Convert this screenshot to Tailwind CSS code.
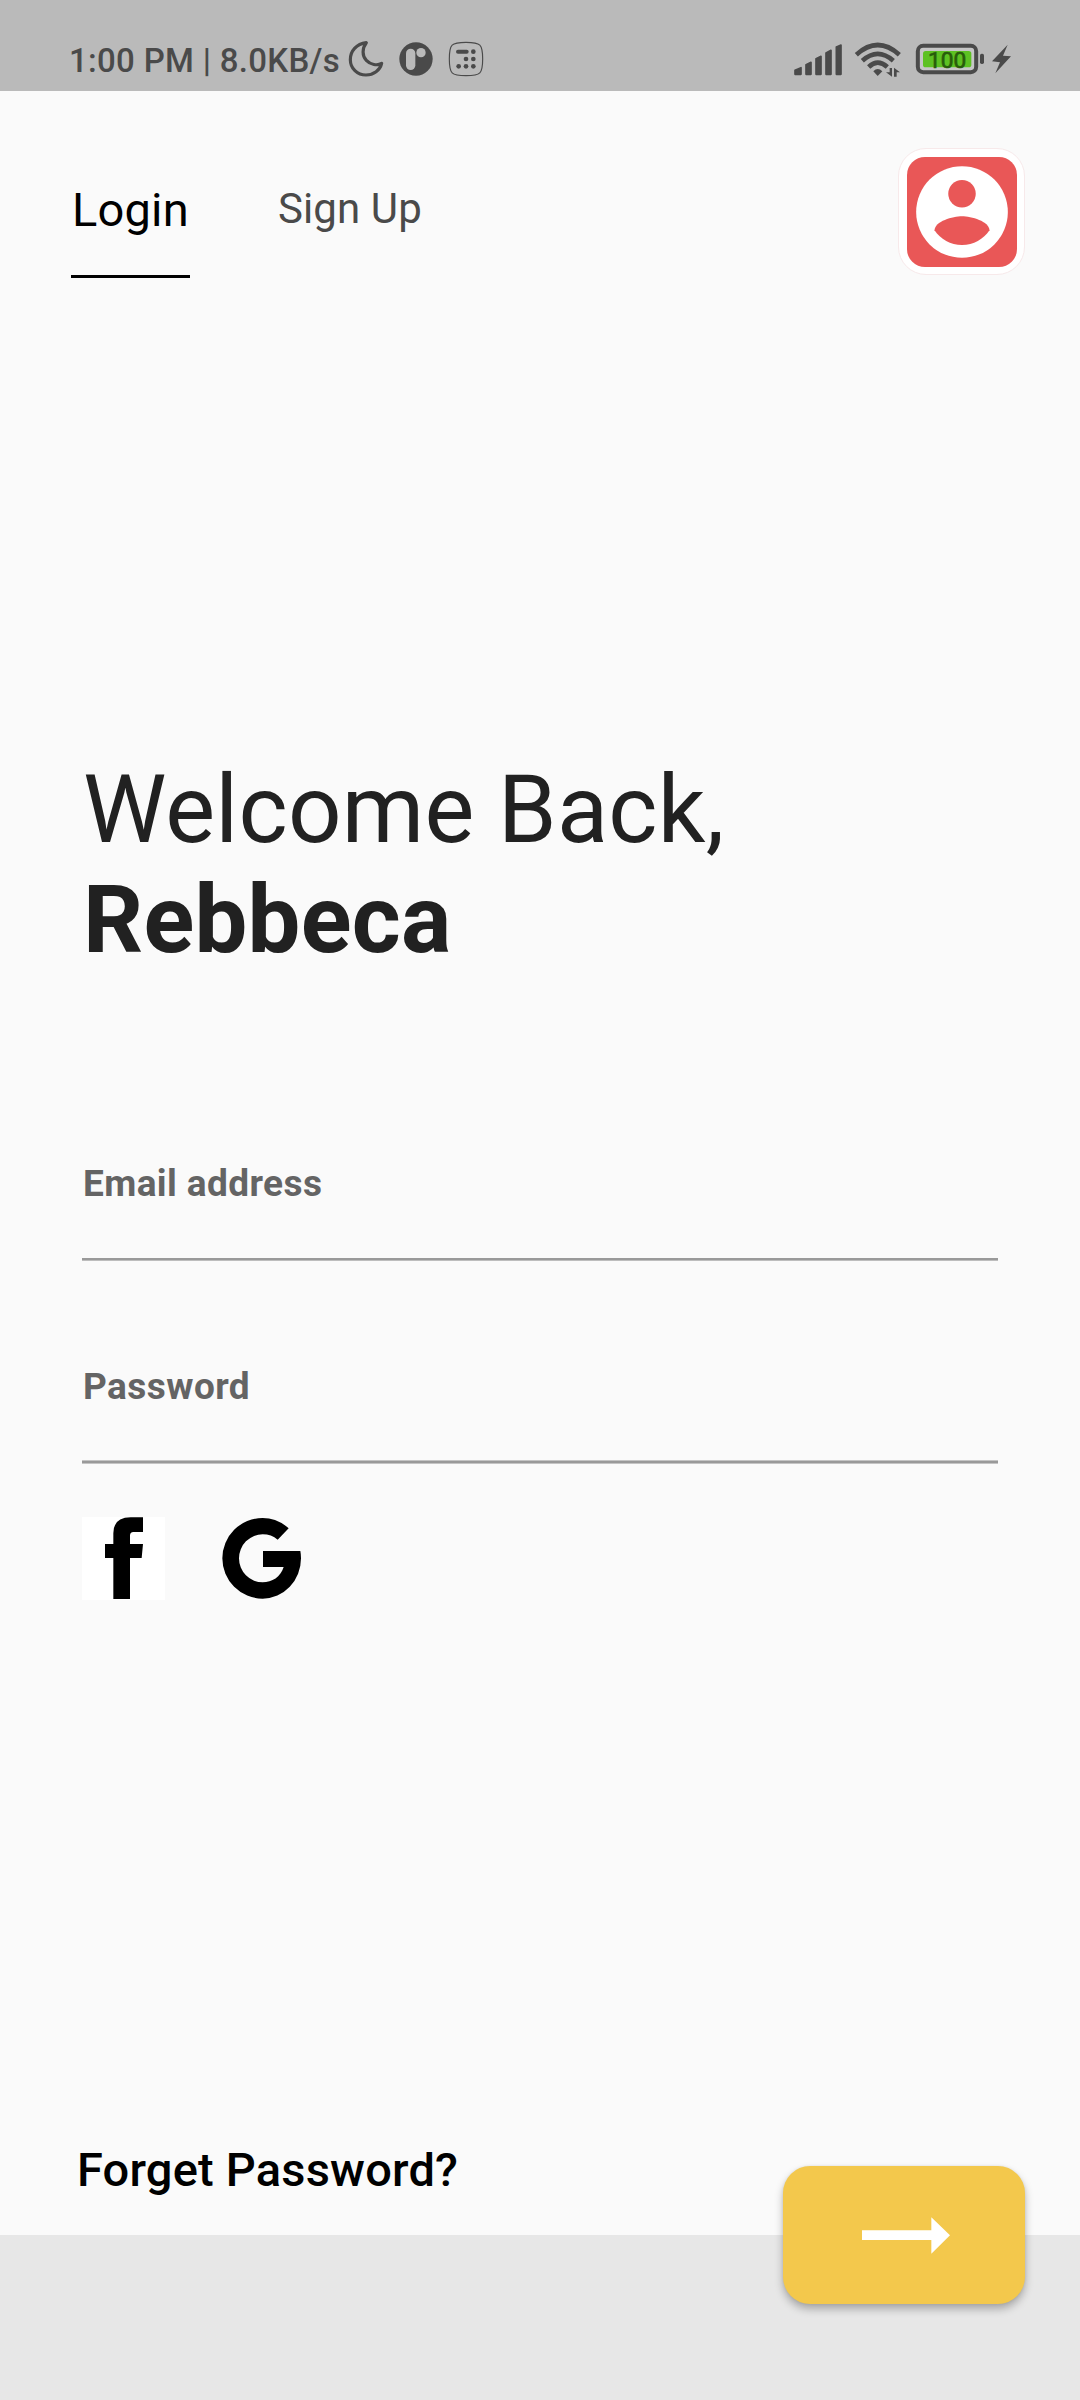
<!DOCTYPE html>
<html lang="en">
<head>
<meta charset="utf-8">
<title>Login</title>
<script src="https://cdn.jsdelivr.net/npm/@tailwindcss/browser@4"></script>
</head>
<body class="flex h-[2400px] w-[1080px] flex-col overflow-hidden bg-[#fafafa] font-['Roboto',sans-serif]">

  <!-- Status bar -->
  <div class="flex h-[91px] shrink-0 items-start bg-[#bababa] pt-5 text-[#4a4a4a]">
    <div class="ml-[69px] mt-[21px] w-[278px] whitespace-nowrap text-[33px] font-medium leading-10 tracking-[0.3px]">1:00 PM | 8.0KB/s</div>
    <svg class="h-20 w-[148px] shrink-0" viewBox="81 0 444 240">
      <path d="M139 68C109 72 91 93 91 119C91 145 112 165 138 165C161 165 180 151 185 130C172 138 151 134 139 121C126 107 126 85 139 68Z" fill="none" stroke="currentColor" stroke-width="9.5" stroke-linejoin="round"/>
      <circle cx="288" cy="117" r="50" fill="currentColor"/>
      <rect x="258" y="86" width="28" height="64" rx="14" fill="#bababa"/>
      <circle cx="303" cy="98" r="14" fill="#bababa"/>
      <path d="M388 117C388 73 394 67 438 67S488 73 488 117S482 167 438 167S388 161 388 117Z" fill="none" stroke="currentColor" stroke-width="3.5"/>
      <path d="M414 95H440" stroke="currentColor" stroke-width="12" stroke-linecap="round"/>
      <g fill="currentColor"><circle cx="460" cy="95" r="7"/><circle cx="438" cy="117" r="7"/><circle cx="460" cy="117" r="7"/><circle cx="416" cy="139" r="7"/><circle cx="438" cy="139" r="7"/><circle cx="460" cy="139" r="7"/></g>
    </svg>
    <svg class="ml-auto mr-10 h-20 w-[260px] shrink-0" viewBox="0 0 780 240">
      <g fill="currentColor" stroke="currentColor" stroke-width="5" stroke-linejoin="round">
        <path d="M45 151L63 143V163H45ZM78 134L93 127V163H78ZM108 116L123 109V163H108ZM138 99L153 91V163H138ZM169 81L183 75V163H169Z"/>
      </g>
      <g fill="none" stroke="currentColor" stroke-width="14">
        <path d="M229 104Q293 46 358 104"/>
        <path d="M247 122Q293 81 340 122"/>
        <path d="M266 141Q293 115 322 141"/>
      </g>
      <path d="M280 154Q293 140 307 154L293 168Z" fill="currentColor"/>
      <path d="M336 144V170L318 157H329V144ZM342 170V143L360 157H350V170Z" fill="currentColor"/>
      <rect x="413.500" y="77.500" width="175" height="79" rx="16" fill="#c6c6c6" stroke="currentColor" stroke-width="12"/>
      <rect x="429" y="93" width="145" height="49" rx="8" fill="#5dc122"/>
      <text x="444" y="143" font-family="Roboto, sans-serif" font-size="68" textLength="115" fill="#285c0b" stroke="#285c0b" stroke-width="2">100</text>
      <rect x="600" y="101" width="12" height="31" rx="5" fill="currentColor"/>
      <path d="M683 74L636 124L660 127L646 160L693 109L669 107Z" fill="currentColor"/>
    </svg>
  </div>

  <!-- Tabs and avatar -->
  <header class="flex h-[187px] shrink-0 items-start pl-[71px] pr-[55px]">
    <div class="mt-[91px] flex w-[119px] flex-col">
      <span class="ml-px text-[47px] leading-[56px] tracking-[0.2px] text-black">Login</span>
      <span class="mt-[37px] h-[3px] bg-black"></span>
    </div>
    <span class="ml-[88px] mt-[90px] whitespace-nowrap text-[42px] leading-[56px] tracking-[0.1px] text-[#4a4a4a]">Sign Up</span>
    <div class="ml-auto mt-[57px] flex size-[127px] items-center justify-center rounded-[28px] border border-[#f7e9ea] bg-white">
      <div class="size-[110px] rounded-[18px] bg-[#e95757]">
        <svg class="size-full" viewBox="0 0 24 24">
          <circle cx="12" cy="12" r="10" fill="#fff"/>
          <circle cx="12" cy="8" r="3" fill="#e95757"/>
          <path d="M12 19.2c-2.5 0-4.71-1.28-6-3.22.03-1.99 4-3.08 6-3.08s5.97 1.09 6 3.08c-1.29 1.94-3.5 3.22-6 3.22z" fill="#e95757"/>
        </svg>
      </div>
    </div>
  </header>

  <!-- Login form -->
  <main class="flex flex-1 flex-col pl-[82px] pr-[82px]">
    <h1 class="ml-px mt-[477px] text-[94px] leading-[110px] tracking-[0.25px] text-[#212121]">Welcome Back,<br><b class="font-bold">Rebbeca</b></h1>
    <label class="ml-px mt-[187px] text-[37px] font-bold leading-[44px] tracking-[0.4px] text-[#646464]">Email address</label>
    <div class="mt-[52px] h-[3px] border-b border-[#bdbdbd] bg-[#999]"></div>
    <label class="ml-px mt-[104px] text-[37px] font-bold leading-[44px] tracking-[0.45px] text-[#646464]">Password</label>
    <div class="mt-[51px] h-1 border-y border-[#c4c4c4] bg-[#999]"></div>
    <div class="mt-[53px] flex gap-[55px]">
      <svg class="size-[83px] bg-white" viewBox="66 81 249 249">
        <path d="M160 327V204H135V162H160V130Q160 82 212 82H249V126H220Q210 126 210 137V162H249L245 204H210V327Z"/>
      </svg>
      <svg class="size-[83px]" viewBox="480 81 249 249">
        <path d="M686 115A120 121 0 0 0 608 84A121 121 0 0 0 487 205A121 121 0 0 0 608 326A115 121 0 0 0 723 205Q723 193 721 183H609V231H671C662 261 636 277 608 277A71 72 0 0 1 537 205A71 72 0 0 1 608 133Q634 133 653 149Z"/>
      </svg>
    </div>
    <a class="-ml-[5px] mb-[37px] mt-auto text-[47px] font-medium leading-[56px] tracking-[0.2px] text-black">Forget Password?</a>
  </main>

  <!-- Bottom bar with the floating submit button -->
  <footer class="relative h-[165px] shrink-0 bg-[#e7e7e7]">
    <button class="absolute -top-[69px] right-[55px] flex h-[138px] w-[242px] items-center justify-center rounded-[27px] bg-[#f3c84c] shadow-[0_5px_8px_rgba(0,0,0,0.28),0_0_3px_rgba(0,0,0,0.08)]">
      <svg class="ml-1 h-[37px] w-[88px]" viewBox="306 230 264 111"><path d="M306 270H514V231L570 285L514 340V299H306Z" fill="#fff"/></svg>
    </button>
  </footer>
</body>
</html>
